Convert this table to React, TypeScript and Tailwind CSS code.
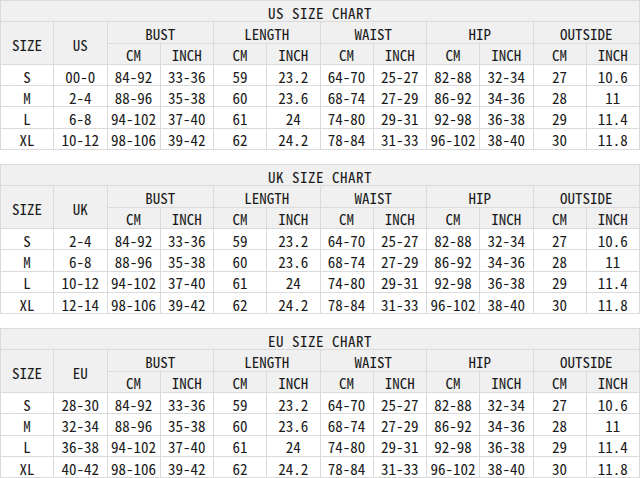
import React from "react";

type Chart = {
    title: string;
    region: string;
    rows: string[][];
};

const sizes = ["S", "M", "L", "XL"];

const common = [
    ["84-92", "33-36", "59", "23.2", "64-70", "25-27", "82-88", "32-34", "27", "10.6"],
    ["88-96", "35-38", "60", "23.6", "68-74", "27-29", "86-92", "34-36", "28", "11"],
    ["94-102", "37-40", "61", "24", "74-80", "29-31", "92-98", "36-38", "29", "11.4"],
    ["98-106", "39-42", "62", "24.2", "78-84", "31-33", "96-102", "38-40", "30", "11.8"],
];

const charts: Chart[] = [
    { title: "US SIZE CHART", region: "US", rows: ["00-0", "2-4", "6-8", "10-12"].map((r, i) => [sizes[i], r, ...common[i]]) },
    { title: "UK SIZE CHART", region: "UK", rows: ["2-4", "6-8", "10-12", "12-14"].map((r, i) => [sizes[i], r, ...common[i]]) },
    { title: "EU SIZE CHART", region: "EU", rows: ["28-30", "32-34", "36-38", "40-42"].map((r, i) => [sizes[i], r, ...common[i]]) },
];

const groups = ["BUST", "LENGTH", "WAIST", "HIP", "OUTSIDE"];

const cell = "flex items-center justify-center pt-[2px] border-r border-b border-[#dadada]";
const head = `${cell} bg-[#f0f0f0] font-medium`;

function SizeChart({ chart }: { chart: Chart }) {
    return (
        <div className="grid grid-cols-12 auto-rows-[21.3px] border-t border-l border-[#dadada]">
            <div className={`${head} col-span-12 tracking-[0.5px]`}>{chart.title}</div>
            <div className={`${head} row-span-2`}>SIZE</div>
            <div className={`${head} row-span-2`}>{chart.region}</div>
            {groups.map((g) => (
                <div key={g} className={`${head} col-span-2`}>
                    {g}
                </div>
            ))}
            {groups.map((g) => (
                <React.Fragment key={g + "-u"}>
                    <div className={head}>CM</div>
                    <div className={head}>INCH</div>
                </React.Fragment>
            ))}
            {chart.rows.map((row, i) =>
                row.map((v, j) => (
                    <div key={`${i}-${j}`} className={`${cell} bg-white`}>
                        {v}
                    </div>
                ))
            )}
        </div>
    );
}

export default function App() {
    return (
        <div className="w-[640px] h-[478px] overflow-hidden bg-white text-[15px] leading-none text-[#1a1a1a] flex flex-col gap-[14px] font-['Noto_Sans_Mono_CJK_SC','Noto_Sans_CJK_SC',monospace]">
            {charts.map((c) => (
                <SizeChart key={c.title} chart={c} />
            ))}
        </div>
    );
}
